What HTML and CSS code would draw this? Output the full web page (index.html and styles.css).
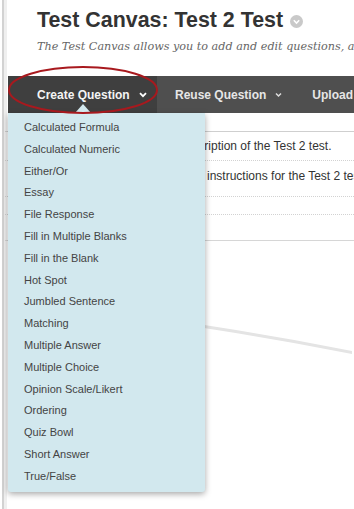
FILE: index.html
```html
<!DOCTYPE html>
<html lang="en">
<head>
    <meta charset="UTF-8">
    <title>Test Canvas: Test 2 Test</title>
    <link rel="stylesheet" href="styles.css">
</head>
<body>

<div class="frame">
    <div class="page-header">
        <h1>Test Canvas: Test 2 Test
            <span class="title-menu">
                <svg width="13" height="13" viewBox="0 0 13 13"><circle cx="6.5" cy="6.5" r="6.5" fill="#c9c9c9"/><path d="M3.8 5.3 L6.5 8 L9.2 5.3" fill="none" stroke="#fff" stroke-width="1.6"/></svg>
            </span>
        </h1>
        <p class="intro">The Test Canvas allows you to add and edit questions, add questions from other sources, and set point values.</p>
    </div>

    <div class="toolbar">
        <div class="tb-item active">
            Create Question
            <svg class="chev" width="8" height="6" viewBox="0 0 8 6"><path d="M1 1.2 L4 4.2 L7 1.2" fill="none" stroke="#fff" stroke-width="1.8"/></svg>
            <svg class="highlight" width="152" height="50" viewBox="0 0 152 50"><ellipse cx="76" cy="25" rx="74" ry="23" fill="none" stroke="#a8191e" stroke-width="2"/></svg>
            <ul class="dropdown">
                <li>Calculated Formula</li>
                <li>Calculated Numeric</li>
                <li>Either/Or</li>
                <li>Essay</li>
                <li>File Response</li>
                <li>Fill in Multiple Blanks</li>
                <li>Fill in the Blank</li>
                <li>Hot Spot</li>
                <li>Jumbled Sentence</li>
                <li>Matching</li>
                <li>Multiple Answer</li>
                <li>Multiple Choice</li>
                <li>Opinion Scale/Likert</li>
                <li>Ordering</li>
                <li>Quiz Bowl</li>
                <li>Short Answer</li>
                <li>True/False</li>
            </ul>
        </div>
        <div class="tb-item reuse">
            Reuse Question
            <svg class="chev" width="7" height="6" viewBox="0 0 7 6"><path d="M1 1.5 L3.5 4 L6 1.5" fill="none" stroke="#ddd" stroke-width="1.5"/></svg>
        </div>
        <div class="tb-item">Upload Questions</div>
    </div>

    <div class="content">
        <svg class="swoosh" width="347" height="300"><path d="M120 202 Q240 218 360 242" fill="none" stroke="#e4e4e4" stroke-width="3"/></svg>
        <div class="row first"><span class="row-text">Description of the Test 2 test.</span></div>
        <div class="row second"><span class="row-text">Enter instructions for the Test 2 test.</span></div>
        <div class="row third"></div>
        <div class="row fourth"></div>
    </div>
</div>

</body>
</html>
```

FILE: styles.css
```css
body {
    margin: 0;
    font-family: "Liberation Sans", Arial, sans-serif;
    background: #fff;
    overflow: hidden;
}
.frame {
    margin-left: 2px;
    border-left: 2px solid #d2d2d2;
    box-shadow: inset 3px 0 0 #efefef;
    min-height: 509px;
}
.page-header {
    padding: 7px 0 0 33px;
}
.page-header h1 {
    margin: 0;
    font-size: 21.4px;
    line-height: 26px;
    color: #333;
    white-space: nowrap;
}
.title-menu {
    display: inline-block;
    margin-left: 1px;
    vertical-align: -1px;
}
.title-menu svg {
    display: block;
}
.intro {
    margin: 6px 0 0;
    font-family: "DejaVu Serif", serif;
    font-style: italic;
    font-size: 11.2px;
    line-height: 16px;
    color: #666;
    white-space: nowrap;
    overflow: hidden;
}
.toolbar {
    display: flex;
    margin: 21px 0 0 4px;
    height: 37px;
    background: #4f4f4f;
}
.tb-item {
    position: relative;
    display: flex;
    align-items: center;
    gap: 9px;
    padding: 0 15px 0 18px;
    font-size: 12px;
    font-weight: bold;
    color: #e6e6e6;
    white-space: nowrap;
}
.tb-item.active {
    width: 149px;
    box-sizing: border-box;
    padding-left: 29px;
    background: #3f3f3f;
    color: #f4f4f4;
}
.tb-item.reuse {
    padding-right: 12px;
}
.chev {
    flex: none;
}
.highlight {
    position: absolute;
    left: -1px;
    top: -11px;
    z-index: 3;
}
.dropdown {
    position: absolute;
    left: 0;
    top: 100%;
    z-index: 2;
    width: 197px;
    margin: 0;
    padding: 4px 0 4px;
    list-style: none;
    background: #d2e8ee;
    border-radius: 0 0 3px 3px;
    box-shadow: 0 2px 6px rgba(0,0,0,0.35);
}
.dropdown::before {
    content: "";
    position: absolute;
    left: 67px;
    top: -9px;
    border-left: 8px solid transparent;
    border-right: 8px solid transparent;
    border-bottom: 9px solid #d2e8ee;
}
.dropdown li {
    padding-left: 16px;
    font-size: 11px;
    font-weight: normal;
    line-height: 21.8px;
    color: #444;
}
.content {
    position: relative;
    padding-top: 18px;
    margin-left: 1px;
}
.swoosh {
    position: absolute;
    left: 0;
    top: 0;
}
.row {
    position: relative;
    padding-left: 172px;
    font-size: 12px;
    line-height: 14px;
    color: #333;
    white-space: nowrap;
    overflow: hidden;
}
.row.first {
    border-top: 1px solid #cfcfcf;
    padding-top: 7px;
    padding-bottom: 7px;
    border-bottom: 1px dotted #d2d2d2;
}
.row.second {
    padding-top: 8px;
    padding-bottom: 13px;
    border-bottom: 1px dotted #d2d2d2;
    padding-left: 170px;
}
.row.third {
    height: 17px;
    border-bottom: 1px dotted #d2d2d2;
}
.row.fourth {
    height: 25px;
    border-bottom: 1px solid #d6d6d6;
}
```
